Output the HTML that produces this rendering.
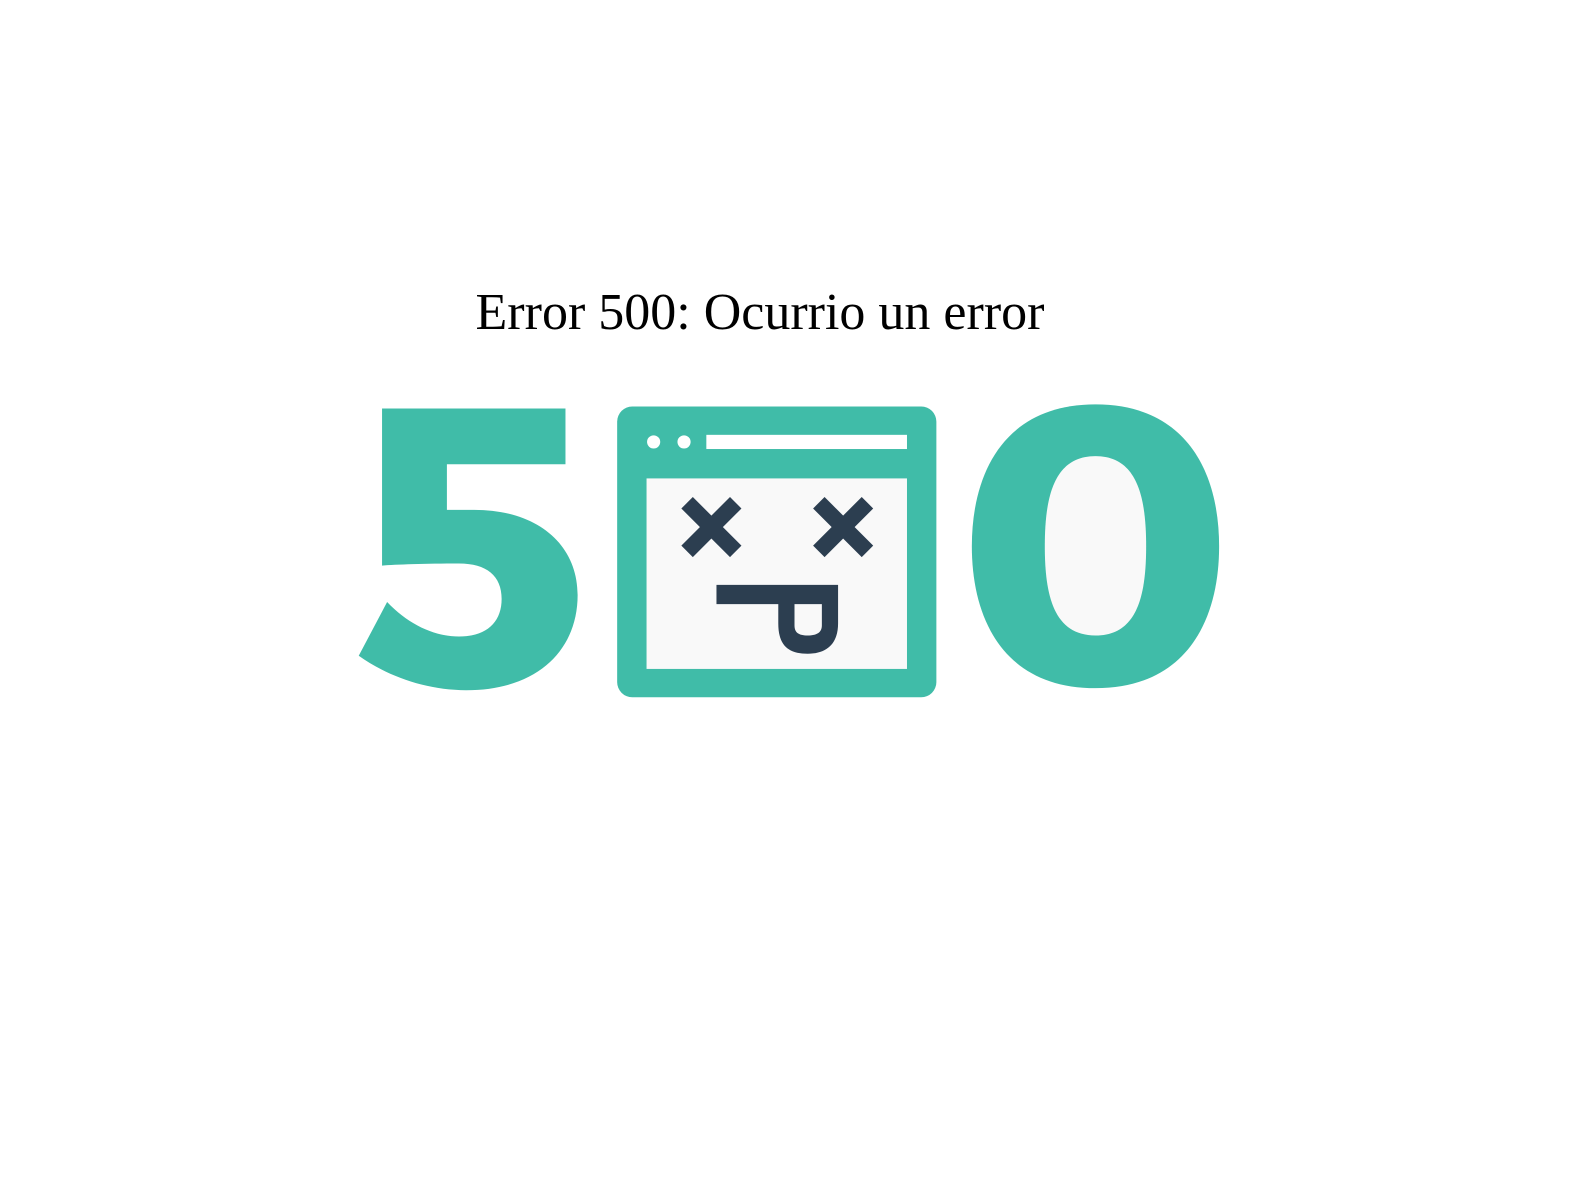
<!DOCTYPE html>
<html><head><meta charset="utf-8"><style>
html,body{margin:0;padding:0;background:#fff;width:1589px;height:1197px;overflow:hidden}
h1{position:absolute;left:0;width:1520px;top:283px;margin:0;text-align:center;font:400 52px "Liberation Serif",serif;color:#000;white-space:nowrap}
svg{position:absolute;left:0;top:0}
</style></head><body>
<h1>Error 500: Ocurrio un error</h1>
<svg width="1589" height="1197" viewBox="0 0 1568 1181">
<path fill="#40bca8" d="M377,403 H558 V458 H441 V503 H468 C530,503 570,537 570,587 C570,640 532,681 460,681 C420,681 382,667 354,647 L382,594 C403,616 428,628 453,628 C480,628 495,614 495,591 C495,568 480,556 453,556 C420,556 390,557 377,558 Z"/>
<path fill="#40bca8" d="M1081,399 C1170,399 1203,465 1203,539 C1203,613 1170,679 1081,679 C992,679 959,613 959,539 C959,465 992,399 1081,399Z"/>
<path fill="#f9f9f9" d="M1081,450 C1122,450 1131,490 1131,539 C1131,588 1122,627 1081,627 C1040,627 1031,588 1031,539 C1031,490 1040,450 1081,450Z"/>
<rect x="609" y="401" width="315" height="287" rx="15" fill="#40bca8"/>
<rect x="638" y="472" width="257" height="188" fill="#f9f9f9"/>
<circle cx="645" cy="436" r="6.5" fill="#fff"/>
<circle cx="675" cy="436" r="6.5" fill="#fff"/>
<rect x="697" y="429" width="198" height="14" fill="#fff"/>
<g stroke="#2c3e50" stroke-width="16" stroke-linecap="butt">
<line x1="678" y1="496" x2="726" y2="544"/><line x1="726" y1="496" x2="678" y2="544"/>
<line x1="808" y1="496" x2="856" y2="544"/><line x1="856" y1="496" x2="808" y2="544"/>
</g>
<path fill="#2c3e50" fill-rule="evenodd" d="M707,577 H827 V615 C827,635 816,645 797,645 C778,645 768,637 768,615 V596 H707 Z M784,596 V617 C784,624 788,627 797,627 C806,627 811,624 811,617 V596 Z"/>
</svg>
</body></html>
